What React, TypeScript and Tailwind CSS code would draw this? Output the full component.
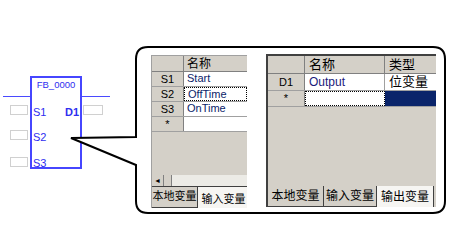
import React from 'react';

const cjk = { fontFamily: '"Liberation Sans", "Noto Sans CJK SC", sans-serif' };

const leftRows = [
  { id: 'S1', name: 'Start' },
  { id: 'S2', name: 'OffTime', focus: true },
  { id: 'S3', name: 'OnTime' },
  { id: '*', name: '' },
];

function FbBlock() {
  return (
    <div className="absolute left-[3px] top-[76px] w-[107px] h-[93px]">
      {/* wire */}
      <div className="absolute left-0 right-0 top-[20px] h-[1px] bg-[#4a4aff]" />
      {/* input / output boxes */}
      <div className="absolute left-[7px] top-[29px] w-[18px] h-[10px] border border-[#d0d0d0] bg-white" />
      <div className="absolute left-[7px] top-[54px] w-[18px] h-[10px] border border-[#d0d0d0] bg-white" />
      <div className="absolute left-[7px] top-[81px] w-[18px] h-[10px] border border-[#d0d0d0] bg-white" />
      <div className="absolute left-[80px] top-[29px] w-[20px] h-[10px] border border-[#d0d0d0] bg-white" />
      <div className="absolute left-[27px] top-0 w-[52px] h-[93px] border-2 border-[#4646ff] bg-white flex flex-col text-[11px] leading-[12px] text-[#2e2ef0]">
        <div className="text-center mt-[1px] text-[9.5px] leading-[12px]">FB_0000</div>
        <div className="flex justify-between px-[1px] mt-[15px]">
          <span>S1</span>
          <span className="font-bold">D1</span>
        </div>
        <div className="px-[1px] mt-[13px]">S2</div>
        <div className="px-[1px] mt-[14px]">S3</div>
      </div>
    </div>
  );
}

function Tab({ label, active, width, size }: { label: string; active?: boolean; width: number; size: string }) {
  return (
    <div
      style={{ width }}
      className={`shrink-0 h-full flex justify-center border-r border-[#404040] ${size} text-black ${
        active ? 'bg-[#f6f5f2] items-end pb-[1px]' : 'bg-[#d4d0c8] items-start pt-[1px] border-b'
      }`}
    >
      {label}
    </div>
  );
}

function LeftPanel() {
  return (
    <div className="w-[96px] h-[153px] mt-[1px] bg-[#d4d0c8] border-l border-t border-[#a0a0a0] flex flex-col overflow-hidden" style={cjk}>
      <div className="flex h-[16px] border-b border-[#808080]">
        <div className="w-[32px] border-r border-[#808080]" />
        <div className="flex-1 pl-[3px] text-[12px] leading-[16px]">名称</div>
      </div>
      {leftRows.map((r) => (
        <div key={r.id} className="flex h-[15px] border-b border-[#a0a0a0]">
          <div className="w-[32px] border-r border-[#808080] text-center text-[11px] leading-[14px]">{r.id}</div>
          <div
            className={`flex-1 bg-white pl-[3px] text-[11px] leading-[13px] text-[#0a246a] ${
              r.focus ? 'border border-dotted border-black' : ''
            }`}
          >
            {r.name}
          </div>
        </div>
      ))}
      <div className="flex-1" />
      <div className="flex h-[12px] border-b border-[#404040]">
        <div className="w-[12px] bg-[#d4d0c8] border-r border-[#808080] flex items-center justify-center text-[7px] leading-none">◄</div>
        <div className="w-[8px] bg-[#d4d0c8] border-r border-[#808080]" />
        <div className="flex-1 bg-[#ecebe6]" />
      </div>
      <div className="flex h-[21px]">
        <Tab label="本地变量" width={46} size="text-[11px]" />
        <Tab label="输入变量" width={52} size="text-[11px]" active />
      </div>
    </div>
  );
}

function RightPanel() {
  return (
    <div className="w-[170px] h-[153px] bg-[#d4d0c8] border-l-2 border-t-2 border-[#404040] flex flex-col overflow-hidden" style={cjk}>
      <div className="flex h-[18px] border-b border-[#808080]">
        <div className="w-[37px] border-r border-[#808080]" />
        <div className="w-[80px] border-r border-[#808080] pl-[4px] text-[13px] leading-[18px]">名称</div>
        <div className="flex-1 pl-[4px] text-[13px] leading-[18px]">类型</div>
      </div>
      <div className="flex h-[17px] border-b border-[#a0a0a0]">
        <div className="w-[37px] border-r border-[#808080] text-center text-[11px] leading-[16px]">D1</div>
        <div className="w-[80px] bg-white border-r border-[#a0a0a0] pl-[4px] text-[12px] leading-[16px] text-[#1a1a7a]">Output</div>
        <div className="flex-1 bg-white pl-[4px] text-[13px] leading-[16px]">位变量</div>
      </div>
      <div className="flex h-[16px] border-b border-[#a0a0a0]">
        <div className="w-[37px] border-r border-[#808080] text-center text-[11px] leading-[14px]">*</div>
        <div className="w-[80px] bg-white border border-dotted border-black" />
        <div className="flex-1 bg-[#0a246a]" />
      </div>
      <div className="flex-1" />
      <div className="flex h-[21px]">
        <Tab label="本地变量" width={56} size="text-[12px]" />
        <Tab label="输入变量" width={53} size="text-[12px]" />
        <Tab label="输出变量" width={57} size="text-[12px]" active />
      </div>
    </div>
  );
}

export default function App() {
  return (
    <div className="relative w-[462px] h-[249px] bg-white overflow-hidden" style={cjk}>
      <FbBlock />

      {/* Callout bubble */}
      <svg className="absolute left-0 top-0" width="462" height="249">
        <path
          d="M 71 138 L 136 137 L 136 59 Q 136 47 148 47 L 433 47 Q 445 47 445 59 L 445 201 Q 445 213 433 213 L 148 213 Q 136 213 136 201 L 136 165 Z"
          fill="white"
          stroke="black"
          strokeWidth="2"
          strokeLinejoin="miter"
        />
      </svg>

      <div className="absolute left-[151px] top-[54px] flex gap-[19px] items-start">
        <LeftPanel />
        <RightPanel />
      </div>
    </div>
  );
}
